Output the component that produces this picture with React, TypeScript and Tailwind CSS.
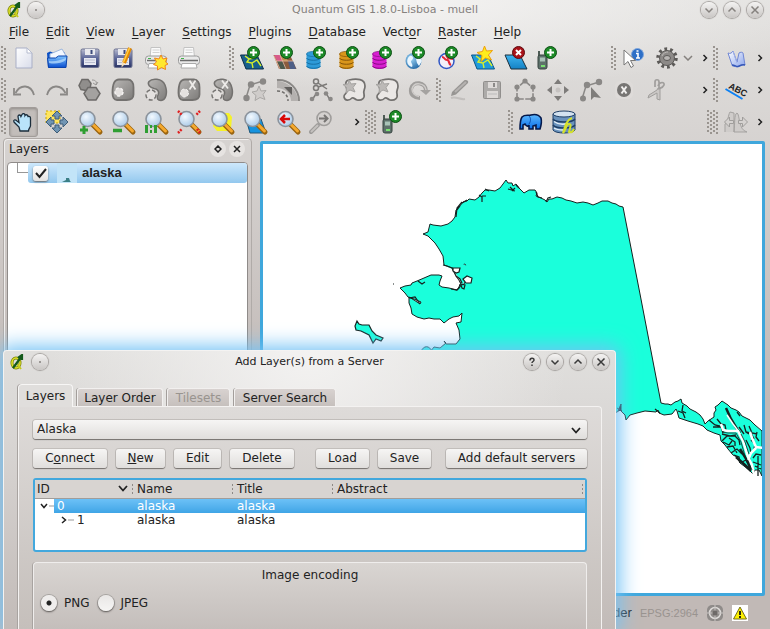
import type { ReactNode } from "react";

const GRAY = "#8a8886";

function Defs() {
  return (
    <svg className="absolute h-0 w-0" aria-hidden="true">
      <defs>
        <linearGradient id="steel" x1="0" y1="0" x2="0" y2="1">
          <stop offset="0" stopColor="#b9bcd0" />
          <stop offset="0.5" stopColor="#5b6699" />
          <stop offset="1" stopColor="#2b3566" />
        </linearGradient>
        <linearGradient id="paper" x1="0" y1="0" x2="1" y2="1">
          <stop offset="0" stopColor="#ffffff" />
          <stop offset="1" stopColor="#d8dcea" />
        </linearGradient>
        <linearGradient id="sea" x1="0" y1="0" x2="0" y2="1">
          <stop offset="0" stopColor="#3db4f0" />
          <stop offset="1" stopColor="#1481c4" />
        </linearGradient>
        <linearGradient id="folder" x1="0" y1="0" x2="0" y2="1">
          <stop offset="0" stopColor="#7fc4ff" />
          <stop offset="1" stopColor="#0a4fd0" />
        </linearGradient>
        <linearGradient id="pages" x1="0" y1="0" x2="1" y2="1">
          <stop offset="0" stopColor="#ffffff" />
          <stop offset="1" stopColor="#8aa4ec" />
        </linearGradient>
        <linearGradient id="metal" x1="0" y1="0" x2="1" y2="1">
          <stop offset="0" stopColor="#b9b7b5" />
          <stop offset="1" stopColor="#7d7b79" />
        </linearGradient>
        <linearGradient id="azure" x1="0" y1="0" x2="0" y2="1">
          <stop offset="0" stopColor="#5cb8ff" />
          <stop offset="1" stopColor="#0c6fe8" />
        </linearGradient>
        <radialGradient id="lens" cx="0.4" cy="0.35" r="0.7">
          <stop offset="0" stopColor="#f2f9ff" />
          <stop offset="1" stopColor="#a8c8e6" />
        </radialGradient>
        <radialGradient id="globe" cx="0.35" cy="0.35" r="0.8">
          <stop offset="0" stopColor="#9fd6f5" />
          <stop offset="1" stopColor="#125a9c" />
        </radialGradient>
      </defs>
    </svg>
  );
}

function Icon({ children }: { children: ReactNode }) {
  return (
    <svg width="24" height="24" viewBox="0 0 24 24" fill="none" aria-hidden="true" className="shrink-0 overflow-visible">
      {children}
    </svg>
  );
}

const Plus = () => (
  <>
    <circle cx="13.5" cy="6.5" r="6" fill="#1c8a27" stroke="#0c4f13" />
    <path d="M13.5 3v7M10 6.5h7" stroke="#fff" strokeWidth="2" />
  </>
);

const Db = ({ c, d }: { c: string; d: string }) => (
  <>
    <path d="M0.5 8v12c0 4 14 4 14 0V8z" fill={c} />
    <ellipse cx="7.5" cy="8" rx="7" ry="2.6" fill={c} stroke={d} strokeWidth="0.7" />
    <path d="M0.5 12c1 3 13 3 14 0M0.5 16c1 3 13 3 14 0M0.5 20c1 3 13 3 14 0" stroke={d} />
  </>
);

const MapSheet = () => (
  <>
    <path d="M0.5 9H17l6.5 14H6z" fill="#17608c" stroke="#0b2f4a" />
    <path d="M5 10l4 3-2 3 5 1 1 5M12 17l5-3 4 6M9 13l6-1" stroke="#d6ef2c" strokeWidth="1.4" />
  </>
);

const Floppy = () => (
  <>
    <rect x="3" y="3" width="18" height="18.5" rx="1.5" fill="url(#steel)" stroke="#6a7090" />
    <rect x="7" y="3" width="10" height="6" fill="#e8e9ee" />
    <path d="M13.5 4v4" stroke="#3d4a7c" strokeWidth="2" />
    <rect x="6" y="12" width="12" height="7" fill="#e6e8f1" />
    <path d="M7 14h10M7 16.5h10" stroke="#b9bdd0" />
  </>
);

const Printer = () => (
  <>
    <path d="M7 1.5h9.500l1 10H6z" fill="#fafafa" stroke="#c3c3c3" />
    <path d="M8.500 4h7M8.500 6.500h7" stroke="#d2d2d2" />
    <rect x="1.5" y="10" width="21" height="8.500" rx="3" fill="#e9e9e9" stroke="#9b9b9b" />
    <path d="M3 14.500h18" stroke="#6d6d6d" strokeWidth="1.5" />
    <path d="M5 17.500h14l1 4.500H4z" fill="#fff" stroke="#aaa" />
    <path d="M4 12.500h3" stroke="#40b34a" />
  </>
);

const Glass = () => (
  <>
    <path d="M15 15l7 7" stroke="#9a6410" strokeWidth="5" strokeLinecap="round" />
    <path d="M15.500 15l6 6" stroke="#f5a92e" strokeWidth="3" strokeLinecap="round" />
    <circle cx="9.500" cy="9" r="7.500" fill="url(#lens)" stroke="#8b939c" strokeWidth="1.600" />
  </>
);

const GlassMirror = () => (
  <>
    <path d="M9 15l-7 7" stroke="#9c9a98" strokeWidth="4" strokeLinecap="round" />
    <path d="M8.500 15.500l-6 6" stroke="#c4c1bf" strokeWidth="2" strokeLinecap="round" />
    <circle cx="15" cy="8.500" r="7" fill="#d4d1cf" stroke="#a09e9c" strokeWidth="1.600" />
    <path d="M10 8.500h8M15 5l3.500 3.500L15 12" stroke="#777573" strokeWidth="2" />
  </>
);

const GpsUnit = () => (
  <>
    <path d="M2 5v5" stroke="#4d5b55" strokeWidth="2" />
    <rect x="1" y="9" width="9" height="14" rx="2" fill="#5d716a" stroke="#36433f" />
    <rect x="3" y="11.500" width="5" height="4" fill="#a9c3b7" />
    <path d="M4 20h4" stroke="#79e070" strokeWidth="2" />
  </>
);

const BLOB = "M8 1.500h9c3.500 0 6 4 5.500 8v7c0 4-3 5.500-7 5.500H6c-3 0-4.500-3-4.500-7C1.500 7 3 1.500 8 1.500z";
const CRESCENT = "M5 3.500C8 0 18 0 21 7c3 8 1 15-4 15.500-3 0-5-2-3-5.500 2-4-1-6-4-6.500-4-1-7-4-5-7z";

const icons: Record<string, ReactNode> = {
  new: <><path d="M4 2h11l5 5v15H4z" fill="url(#paper)" stroke="#a9afc6" /><path d="M15 2v5h5z" fill="#fff" stroke="#b6bccf" /></>,
  open: (
    <>
      <path d="M2 7l3-1.500 3 1h12l1 15H3z" fill="#0c50c4" />
      <path d="M5 8l12-5 4 7-16 6z" fill="#f4f8ff" stroke="#9db7dd" />
      <path d="M2.500 12h8l3-2h8.500l-1 11.500H3.500z" fill="url(#folder)" stroke="#0b43ac" />
      <path d="M4 15c6 1 11-1 17-3l-.300 2C16 18 9 18 4.200 17z" fill="#bfe2ff" opacity="0.700" />
    </>
  ),
  save: <Floppy />,
  saveAs: <><Floppy /><path d="M19 2l-6 15" stroke="#e68a00" strokeWidth="4" /><path d="M18.500 2l-6 14" stroke="#ffcd42" strokeWidth="1.500" /><path d="M11 16l3.500 1.500-4 4z" fill="#f7e1b8" /></>,
  composer: (
    <>
      <Printer />
      <path d="M17 9l2 4 4-1-1.500 4 2.500 2-3 1.500.5 4-4-2-4 2.500v-4l-4-1.500 3-2.500-2-4 4.500 1z" fill="#ffe82e" stroke="#f0841a" />
    </>
  ),
  printer: <Printer />,
  addVector: <><MapSheet /><Plus /></>,
  addRaster: (
    <>
      <path d="M0.500 9H17l6.500 14H6z" fill="#8c5c3d" />
      <path d="M1 9h6l3 6H4z" fill="#d85a8a" /><path d="M7 9h5l3 6h-5z" fill="#b9904e" />
      <path d="M4 15h6l3.500 8H7z" fill="#4d5a4d" /><path d="M15 15h5l3 8h-6z" fill="#4e5f87" />
      <path d="M1 10l6 13M7 9l6 14M3 15h17" stroke="#efbca1" strokeWidth="0.800" />
      <Plus />
    </>
  ),
  addBlue: <><Db c="#2e9bd8" d="#1870a5" /><Plus /></>,
  addOrange: <><Db c="#d9961b" d="#855509" /><Plus /></>,
  addPink: <><Db c="#d71fd0" d="#850b82" /><Plus /></>,
  addWms: <><circle cx="8.500" cy="15" r="8" fill="url(#globe)" /><path d="M3 12c3-5 7 0 4 2s2 4 0 7c-4-1-6-5-4-9zM11 13l4-2 2 4-3 5-2-3z" fill="#e9f6ff" /><Plus /></>,
  addWfs: <><circle cx="8.500" cy="15" r="7.500" fill="#f3eff8" stroke="#3157c4" strokeWidth="1.500" /><path d="M4 11c3 0 2 3 5 3s1 4 4 5M8 9l2 3 5 1" stroke="#e32636" strokeWidth="2.200" /><Plus /></>,
  newShape: (
    <>
      <path d="M0.500 9H17l6.500 14H6z" fill="#1f9bdc" stroke="#0b5688" />
      <path d="M5 10l4 3-2 3 5 1 1 5M12 17l5-3 4 6" stroke="#d6ef2c" strokeWidth="1.400" />
      <path d="M13.500 0l2 5 6-.5-4 4.500 3 5-6-2-4.500 3.500 1-6-5-3 5.500-1z" fill="#ffec1c" stroke="#efa00c" />
    </>
  ),
  removeLayer: <><path d="M1 9h15l7 14H7z" fill="url(#sea)" stroke="#1c2f3c" /><circle cx="14.500" cy="6.500" r="6" fill="#a91219" stroke="#5d0a0e" /><path d="M12 4l5 5M17 4l-5 5" stroke="#fff" strokeWidth="2" /></>,
  gps: <><GpsUnit /><Plus /></>,
  identify: (
    <>
      <circle cx="15.500" cy="8.500" r="6" fill="#2d6fc7" stroke="#7ea6dc" />
      <path d="M14 7.500h2v4.500M14 12h4M14.500 5h2" stroke="#fff" strokeWidth="1.600" />
      <path d="M2 4v15l4-3.500 3 6 2.500-1.500-3-5.500h5z" fill="#fff" stroke="#777" />
    </>
  ),
  gear: (
    <>
      <circle cx="12" cy="12" r="9" stroke="#5c5a58" strokeWidth="3.500" strokeDasharray="2.700 2.954" />
      <circle cx="12" cy="12" r="7.500" fill="#8d8a88" stroke="#5c5a58" />
      <ellipse cx="12" cy="12" rx="3.500" ry="2.500" fill="#b9b6b4" stroke="#5c5a58" />
      <path d="M7 10c1-3 4-4 6-4" stroke="#bbb8b6" />
    </>
  ),
  book: (
    <>
      <path d="M4 7c2 1 4 0 5-2l4 11 2-9c1-1 4-1 4 0l2 12c-3-1-6 1-8 2-2-1-5 0-5-2z" fill="url(#pages)" stroke="#6f86d4" />
      <path d="M9 5l4 12" stroke="#9db0e8" />
      <path d="M8 19c3 0 4 2 6 1.500s4-2.500 7-1.500" stroke="#3557b8" strokeWidth="1.500" />
    </>
  ),
  undo: <><path d="M22 17C19 6 8 6 3.500 15" stroke={GRAY} strokeWidth="1.800" /><path d="M2 10v6.500h7" stroke={GRAY} strokeWidth="1.800" /></>,
  redo: <><path d="M2 17C5 6 16 6 20.500 15" stroke={GRAY} strokeWidth="1.800" /><path d="M22 10v6.500h-7" stroke={GRAY} strokeWidth="1.800" /></>,
  simplify: <><path d="M4 1.500h6l3 4-1 5-4 2-5-1-2-4z" fill="#908e8c" stroke="#6c6a68" strokeWidth="1.500" /><path d="M10 9.500h8l4 6-4 6.500h-8l-4-6.500z" fill="#a4a2a0" stroke="#6c6a68" strokeWidth="1.500" /><path d="M14 2c4 0 5 2 4 5M15 5l3 2 2-3" stroke="#979593" /></>,
  ring: <><path d={BLOB} fill="url(#metal)" stroke="#73716f" strokeWidth="1.800" /><circle cx="8" cy="14" r="4" fill="#e4e1df" stroke="#f5f3f2" strokeWidth="1.500" strokeDasharray="3 2" /></>,
  part: <><path d={CRESCENT} fill="url(#metal)" stroke="#73716f" strokeWidth="1.500" /><circle cx="7" cy="17" r="5" fill="#e4e1df" stroke="#777573" strokeWidth="1.500" strokeDasharray="4 2" /></>,
  delRing: <><path d={BLOB} fill="url(#metal)" stroke="#73716f" strokeWidth="1.800" /><circle cx="7.500" cy="15" r="4" fill="#e4e1df" stroke="#f5f3f2" strokeDasharray="3 2" /><path d="M12.500 2.500l6 9M18.500 2.500l-6 9" stroke="#eeecea" strokeWidth="1.800" /></>,
  delPart: <><path d={CRESCENT} fill="url(#metal)" stroke="#73716f" strokeWidth="1.500" /><circle cx="7" cy="17" r="5" fill="#e4e1df" stroke="#777573" strokeWidth="1.500" strokeDasharray="4 2" /><path d="M12 2.500l6 8M18 2.500l-6 8" stroke="#eeecea" strokeWidth="1.800" /></>,
  reshape: (
    <>
      <path d="M3 20l4-13 13-4" stroke={GRAY} strokeWidth="1.500" />
      <circle cx="3.500" cy="20" r="3.200" fill={GRAY} /><circle cx="8" cy="6.500" r="3.200" fill={GRAY} /><circle cx="20" cy="3.500" r="3.200" fill={GRAY} />
      <path d="M16 8l2 5 5-.5-3 4 2 5-5-2-5 3 1-5-4-3.500 5-1z" fill="#cfccca" stroke="#aaa8a6" />
    </>
  ),
  offset: <><path d="M1 3c10 0 21 9 21 20h-7C15 15 8 10 1 10z" fill="#b4b1af" /><path d="M1 2c12-1 22 9 22 21" stroke={GRAY} strokeWidth="2" /><path d="M1 13c7 0 11 4 11 10" stroke="#6f6d6b" strokeWidth="1.500" strokeDasharray="3 2" /><path d="M8 9h8v8z" fill="#62605e" /></>,
  split: (
    <>
      <circle cx="7" cy="3.500" r="2.500" stroke="#7b7977" strokeWidth="1.500" /><circle cx="7" cy="10" r="2.500" stroke="#7b7977" strokeWidth="1.500" />
      <path d="M9 5l9 6M9 9l9-3M3 22l4-6M21 22l-4-7" stroke="#7b7977" strokeWidth="1.500" />
      <circle cx="3" cy="21" r="2.300" fill={GRAY} /><circle cx="8" cy="16" r="2.300" fill={GRAY} /><circle cx="17" cy="15.500" r="2.300" fill={GRAY} /><circle cx="21.500" cy="21" r="2.300" fill={GRAY} />
    </>
  ),
  merge: (
    <>
      <path d="M7 2c8-2 16-1 16 6 0 4-2 4-1 8s-2 7-7 6c-3-1-3-3-5-2-3 3-7 3-8-1-.5-4 4-3 3-7S2 3 7 2z" fill="#eae7e5" stroke="#73716f" strokeWidth="1.700" />
      <path d="M7 2l2 4 5-.5-3 4 2 4.500-5-2-4 2.500.5-5L1 6.500l5-.5z" fill="#bcb9b7" stroke="#a5a3a1" />
    </>
  ),
  rotate: <><path d="M18 13C18 4 5 2 3 11c-1 6 4 9 9 9" stroke="#a09e9c" strokeWidth="4" /><path d="M18 12C17 5 6 3 4 11c0 4 3 7 7 7.500" stroke="#cfccca" strokeWidth="1.500" /><path d="M12 12h11l-5 5z" fill="#a4a2a0" /></>,
  pencil: <><path d="M5 14L17 2.500c2-1 5 0 4 2.500L9 16.500 4 18z" fill="#979593" /><path d="M8 14L19 4" stroke="#b5b2b0" strokeWidth="2" /><path d="M4 20c5-2 9 2 14 1" stroke="#c2bfbd" strokeWidth="2" /></>,
  saveGray: <><rect x="3.500" y="3.500" width="17" height="17" rx="1" fill="#adaba9" stroke="#918f8d" /><rect x="8" y="4" width="9" height="6" fill="#dedbd9" /><path d="M14 5v4" stroke="#8c8a88" strokeWidth="2" /><rect x="7" y="13" width="11" height="7" fill="#dcd9d7" /><path d="M8 16h9" stroke="#bbb" /></>,
  polygon: (
    <>
      <path d="M4 21V10l8-7 8 7v11z" stroke={GRAY} strokeWidth="1.600" strokeDasharray="6 1.500" />
      {[[4, 21], [4, 9], [12, 3], [20, 9], [20, 21]].map(([x, y]) => <circle key={`${x}-${y}`} cx={x} cy={y} r="2.600" fill={GRAY} />)}
    </>
  ),
  move: <><path d="M12 1l4 5H8zM12 23l4-5H8zM1 12l5-4v8zM23 12l-5-4v8z" fill="#7d7b79" /><path d="M9.500 12a2.500 2.500 0 105 0 2.500 2.500 0 10-5 0" fill="#c5c2c0" /></>,
  node: <><path d="M3 21l4-13 13-4" stroke={GRAY} strokeWidth="1.500" /><circle cx="4" cy="20.500" r="3" fill={GRAY} /><circle cx="8" cy="7" r="3.200" fill={GRAY} /><circle cx="20" cy="4" r="3.200" fill={GRAY} /><path d="M12 9v13l3-3 7 1z" fill="#7f7d7b" /></>,
  remove: <><rect x="3" y="3" width="18" height="18" rx="5" fill="#dedbd9" /><circle cx="12" cy="12" r="7" fill="#777573" /><path d="M9.500 8.500l5 7M14.500 8.500l-5 7" stroke="#f2f0ef" strokeWidth="2" /></>,
  scissors: (
    <>
      <path d="M12 12L4 17l-1 3 9-5v6l3 1V7z" fill="#cbc8c6" stroke="#a09e9c" />
      <path d="M10 9V4c0-3 4-3 4 0v6M13 8c2-5 7-4 6-1s-4 3-6 4" fill="#d9d6d4" stroke="#a09e9c" strokeWidth="1.700" />
    </>
  ),
  label: (
    <>
      <text x="4" y="10" transform="rotate(28 4 10)" fontFamily="Liberation Sans, Arial, sans-serif" fontWeight="700" fontSize="9" fill="#222">ABC</text>
      <path d="M1.500 11l17 10" stroke="#0b80f4" strokeWidth="2" />
    </>
  ),
  pan: (
    <path d="M8 21l-1-4-5-5c-1-2 1-3 3-1l2 1.500-1-6c0-2 2.500-2 3 0l1-2c1-1.500 3-1 3 1 1-1.500 3-.5 3 1 2-.5 2.500.5 2.500 2v7c0 2-2 3-2 5.500z" fill="#b9e4fa" stroke="#1b2d3b" strokeWidth="1.300" />
  ),
  panSel: (
    <>
      <path d="M1 1h14v12H1z" fill="#ffe55e" stroke="#c9a500" strokeDasharray="2 2" />
      <path d="M12 1l5 5h-3v3h-4V6H7zM12 23l5-5h-3v-3h-4v3H7zM1 12l5-5v3h3v4H6v3zM23 12l-5-5v3h-3v4h3v3z" fill="#7195b3" stroke="#3e5d78" />
    </>
  ),
  zoomIn: <><Glass /><path d="M6 16v8M2 20h8" stroke="#2f9e32" strokeWidth="3" /></>,
  zoomOut: <><Glass /><path d="M2 20.500h9" stroke="#2f9e32" strokeWidth="3.500" /></>,
  zoomNative: <><Glass /><path d="M1 15h3v8H1zM10 15h3v8h-3z" fill="#2f9e32" /><path d="M7 15v3M7 20v3" stroke="#2f9e32" strokeWidth="2" /></>,
  zoomFull: <><Glass /><path d="M1 1l4 4M23 1l-4 4M1 23l4-4M23 23l-3-4" stroke="#e02020" strokeWidth="2.500" strokeDasharray="2 1" /></>,
  zoomSel: <><path d="M8 3h11l3 4-1 12-4 2H7l-4-5z" fill="#f5f22a" /><Glass /></>,
  zoomLayer: <><path d="M3 9h15l5 14H7z" fill="#1693df" stroke="#205779" /><Glass /></>,
  zoomLast: <><Glass /><path d="M5 9h9M9 5L5 9l4 4" stroke="#d90a0a" strokeWidth="2.500" /></>,
  zoomNext: <GlassMirror />,
  elephant: (
    <>
      <path d="M3 7c3-3 7-1 9-2 4-1 8 0 10 3 1 4 0 8-1 11h-4v-4l-3 1v3h-4v-4c-1 2-3 1-4-1l-2 1v4H1c0-4 0-9 2-12z" fill="url(#azure)" stroke="#04184a" strokeWidth="1.600" />
      <path d="M10 6c2 2 2 5 0 8" stroke="#0b4fb3" />
    </>
  ),
  spatial: (
    <>
      <path d="M1 4v16c2 4 20 4 22 0V4z" fill="#6a93bd" stroke="#1f3f66" />
      <ellipse cx="12" cy="4" rx="11" ry="3" fill="#d3e2f0" stroke="#1f3f66" />
      <path d="M1 9c3 4 19 4 22 0M1 15c3 4 19 4 22 0" stroke="#1f3f66" strokeWidth="1.500" />
      <path d="M2 11.500c4 3 10 3 14 2M2 18c3 2 7 2 9 2" stroke="#e4eef7" strokeWidth="1.500" />
      <path d="M20 8c-6 2-7 9-9 15 3-3 3-9 6-9s1 4 0 8c2 1 4-1 5-3" stroke="#d4e02c" strokeWidth="2" />
    </>
  ),
  histogram: (
    <>
      <path d="M1 22V14c3-1 3-9 5-12l4 1v19M10 22c1-8 0-18 3-19 3 1 1 17 10 19z" fill="#cfccca" stroke="#a5a3a1" />
      <path d="M0.500 12l5-5v3.500h4v3h-4V17zM23.500 12l-5-5v3.500h-4v3h4V17z" fill="#d5d2d0" stroke="#a09e9c" />
    </>
  ),
};

function Tool({ name, label, on = false }: { name: string; label: string; on?: boolean }) {
  return (
    <button
      type="button"
      aria-label={label}
      className={
        "flex h-[30px] shrink-0 items-center justify-center " +
        (on ? "mx-0.5 w-[29px] rounded-[3px] border border-[#a19c99] bg-[#c2bdba] shadow-[inset_0_1px_3px_#8f8a87]" : "w-[33px]")
      }
    >
      <Icon>{icons[name]}</Icon>
    </button>
  );
}

function Tools({ names }: { names: string[] }) {
  return (
    <>
      {names.map((n, i) => (
        <Tool key={n + i} name={n.replace("2", "")} label={n} />
      ))}
    </>
  );
}

const DOTS =
  "bg-[radial-gradient(circle_at_1px_1px,#99948f_0.8px,transparent_1px),radial-gradient(circle_at_4px_3px,#99948f_0.8px,transparent_1px)] bg-[length:6px_4px]";

function Grip({ wide = false }: { wide?: boolean }) {
  return <span className={`h-6 shrink-0 ${wide ? "w-3" : "w-1.5"} ${DOTS}`} />;
}

function More() {
  return (
    <button type="button" aria-label="More tools" className="flex h-6 w-4 shrink-0 items-center justify-center">
      <svg width="6" height="8" viewBox="0 0 6 8" fill="none">
        <path d="M1.500 1l3 3-3 3" stroke="#222" strokeWidth="1.500" />
      </svg>
    </button>
  );
}

const BAR = "flex h-8 items-center pr-0.5 pl-px";

function Toolbars() {
  return (
    <div>
      <div className={BAR}>
        <Grip />
        <Tools names={["new", "open", "save", "saveAs", "composer", "printer"]} />
        <span className="w-6 shrink-0" />
        <Grip />
        <Tools names={["addVector", "addRaster", "addBlue", "addOrange", "addPink", "addWms", "addWfs", "newShape", "removeLayer", "gps"]} />
        <span className="flex-1" />
        <Grip />
        <Tools names={["identify", "gear"]} />
        <svg width="10" height="6" viewBox="0 0 10 6" fill="none" className="shrink-0">
          <path d="M1 1l4 4 4-4" stroke="#85817e" strokeWidth="1.500" />
        </svg>
        <span className="w-1 shrink-0" />
        <More />
        <Grip />
        <Tool name="book" label="Help contents" />
        <More />
      </div>
      <div className={BAR}>
        <Grip />
        <Tools names={["undo", "redo", "simplify", "ring", "part", "delRing", "delPart", "reshape", "offset", "split", "merge", "merge2", "rotate"]} />
        <Grip />
        <Tools names={["pencil", "saveGray", "polygon", "move", "node", "remove", "scissors"]} />
        <span className="flex-1" />
        <More />
        <Grip />
        <Tool name="label" label="Labeling" />
        <More />
      </div>
      <div className={BAR}>
        <Grip />
        <Tool name="pan" label="Pan map" on />
        <Tools names={["panSel", "zoomIn", "zoomOut", "zoomNative", "zoomFull", "zoomSel", "zoomLayer", "zoomLast", "zoomNext"]} />
        <span className="w-3 shrink-0" />
        <More />
        <Grip wide />
        <Tool name="gps" label="GPS tools" />
        <span className="w-[98px] shrink-0" />
        <Grip />
        <Tools names={["elephant", "spatial"]} />
        <span className="flex-1" />
        <Grip wide />
        <Tool name="histogram" label="Stretch histogram" />
        <More />
      </div>
    </div>
  );
}

const MENUS: [string, string, string][] = [
  ["", "F", "ile"],
  ["", "E", "dit"],
  ["", "V", "iew"],
  ["", "L", "ayer"],
  ["", "S", "ettings"],
  ["", "P", "lugins"],
  ["", "D", "atabase"],
  ["Vect", "o", "r"],
  ["", "R", "aster"],
  ["", "H", "elp"],
];

function Logo() {
  return (
    <svg width="14" height="16" viewBox="0 0 14 16" fill="none" aria-hidden="true">
      <ellipse cx="6" cy="9" rx="4" ry="5" stroke="#7d8508" strokeWidth="3" />
      <ellipse cx="6" cy="9" rx="4" ry="5" stroke="#dfe32a" strokeWidth="1.500" />
      <path d="M7 10l4 5" stroke="#c4c91d" strokeWidth="2" />
      <path d="M3 14L12 2M8 4l4-3 0 5" stroke="#145a1c" strokeWidth="2.200" />
    </svg>
  );
}

const GLYPHS: Record<string, string> = {
  dot: "M7 8h2",
  down: "M4.500 6.500l3.500 3.500 3.500-3.500",
  up: "M4.500 9.500L8 6l3.500 3.500",
  close: "M4.500 4.500l7 7M11.500 4.500l-7 7",
  help: "M6 6.500c0-3 4-3 4-.5 0 1.500-2 1.500-2 3M8 10.500v1.500",
};

function RoundButton({ kind, dark = false }: { kind: string; dark?: boolean }) {
  return (
    <button
      type="button"
      aria-label={kind}
      className="h-4 w-4 shrink-0 rounded-full bg-gradient-to-b from-[#f4f3f2] to-[#c9c6c4] shadow-[0_0_1px_1px_#a29e9b]"
    >
      <svg width="16" height="16" viewBox="0 0 16 16" fill="none">
        <path d={GLYPHS[kind]} stroke={dark ? "#3a3a3a" : "#85817e"} strokeWidth="1.500" />
      </svg>
    </button>
  );
}

const ALASKA =
  "M423 234L428 232 430 224 433 225 441 226 448 224 452 221 455 217 456 210 459 207 463 202 467 201 469 199 475 200 479 197 482 193 485 190 489 190 495 191 500 188 503 184 506 180 508 183 512 183 513 186 516 184 519 188 521 190 524 193 529 190 535 190 537 193 536 196 541 198 545 200 547 202 549 199 552 199 557 197 562 198 566 200 571 201 577 203 583 202 588 203 593 205 598 203 602 201 608 201 612 203 616 204 619 206 623 207 640 294 661 403 665 404 668 404 671 405 675 402 678 401 681 399 682 403 687 406 690 409 696 412 700 415 703 419 705 424 708 421 714 417 714 413 716 410 715 407 718 405 722 401 725 403 728 405 731 408 736 410 739 412 742 416 746 418 750 420 755 425 762 431 762 476 759 470 755 470 753 474 749 470 744 466 740 463 737 457 733 455 728 449 725 445 721 441 720 435 714 433 707 430 703 426 698 424 688 421 679 418 677 411 676 409 672 414 664 415 659 413 658 410 656 412 645 411 637 413 630 415 626 420 625 415 623 413 620 410 617 412 560 430 440 400 430 352 434 347 440 348 446 343 444 341 446 344 456 344 460 339 459 330 456 323 461 322 462 313 459 316 453 317 449 319 444 323 440 319 434 319 429 318 424 319 417 317 412 314 411 308 409 303 409 297 414 300 420 304 421 302 414 299 408 297 405 293 400 288 405 286 411 285 412 283 417 281 424 278 431 275 439 275 442 276 440 281 439 285 442 287 449 288 457 290 459 287 460 284 462 285 464 284 466 280 470 277 465 264 452 268 444 265 443 256 439 249 435 243 428 236z";

function MapView() {
  return (
    <svg viewBox="263 144 499 449" preserveAspectRatio="xMinYMin meet" className="block h-full w-full" role="img" aria-label="Map of alaska">
      <path d={ALASKA} fill="#1affdb" stroke="#16211f" strokeWidth="1" />
      <path d="M444 265l8 3 7-6 8 4 8 8-3 8-8 0-2 3-3-7-7-9z" fill="#1affdb" />
      <path d="M443 265l4 1 5 2 4 8 3 4 2 4 4 1-1 4-2-1-1-3-2 3-2 2-6-1" fill="none" stroke="#16211f" strokeWidth="1.200" />
      <path d="M453 268l7 0-1 4-3 1-3-2zM463 279l4-3 5 2-1 5-5 0zM456 276l4 3 2 4" fill="#fff" stroke="#16211f" strokeWidth="1.200" />
      <path d="M357 321l2 3 3 1 7 0 3 6 4 4 7 3-2 3-5-2-3 4-4-8-8-4-5-1-1-4z" fill="#1affdb" stroke="#16211f" strokeWidth="1.200" />
      <path d="M421 352c2-7 9-7 11 0" fill="#1affdb" stroke="#16211f" />
      <path d="M393 284h1" stroke="#16211f" />
      <path
        d="M479 195l3 2 0 5M482 196l4 0M485 189l4 2M508 189l7 2M510 187l4 4M516 185l3 3M512 191l3-3M462 203l5-3M457 210l3-4M456 217l1-9 5-6M536 192l2 5 4 1M546 202l2-4 3-1M409 298l6-1 5 7M418 281l4 3 3-2"
        stroke="#16211f"
        strokeWidth="1.200"
        fill="none"
      />
      <path
        d="M709 420l6 5 5 1 4 6M713 427l8 0 2 6M717 419l4 5 4 1 1 5M722 441l5-5 8 0 4 4 1 5M722 434l8 2 6-1M723 442l6 3 3-4M727 447l6-1 4 7M731 453l6-4 5 5M734 455l5 2 1 6M742 462l4-2 5 9M744 425l2 7 3 2M746 432l5 1 3 6M749 426l3 7 5 1M757 432l-1 5 3 4M751 440l4 4-1 5M746 440l4 8 1 6M753 458l3-4 5 1M753 462l8 3M755 466l6 3M758 456l0 20M737 412l3 4M739 427l5 7M678 411l5 2 2 5M683 405l-1 6 4 2M655 409l5 4M729 438l6 4 0 4"
        stroke="#16211f"
        strokeWidth="1.300"
        fill="none"
      />
      <path d="M726 408l5 11 6 10 3 4M740 449l5 8 6 12M736 457l9 8 6 6M748 455l2 8" stroke="#16211f" strokeWidth="2.500" fill="none" />
      <path d="M727 415l6 9 6 8" stroke="#fff" strokeWidth="1.500" fill="none" />
      <path d="M721 424l2 6 5 1 10 0 5 10 5 16 4 8 2 10M750 432l2 6 4 9 7 1M748 460l3-7 5-5" stroke="#fff" strokeWidth="2.500" fill="none" />
      <path d="M722 432l6 1 8 0 5 9 4 14 7 14M741 434l4 8 4 12" stroke="#16211f" strokeWidth="0.800" fill="none" />
      <path d="M618 411l3-7 0 7M617 408l5 3" stroke="#16211f" />
    </svg>
  );
}

function LayersDock() {
  return (
    <section aria-label="Layers" className="flex w-[249px] shrink-0 flex-col rounded-t border border-[#b0aba8] px-[3px] shadow-[inset_1px_1px_0_#efedec]">
      <header className="flex h-[23px] items-center pr-[3px] pb-1 pl-0.5">
        <h2 className="flex-1">Layers</h2>
        <button type="button" aria-label="Float panel" className="flex h-4 w-4 items-center justify-center rounded-full bg-[#e6e3e1]">
          <svg width="8" height="8" viewBox="0 0 8 8" fill="none"><path d="M4 1l3 3-3 3-3-3z" stroke="#222" strokeWidth="1.500" /></svg>
        </button>
        <button type="button" aria-label="Close panel" className="ml-[3px] flex h-4 w-4 items-center justify-center rounded-full bg-[#e6e3e1]">
          <svg width="8" height="8" viewBox="0 0 8 8" fill="none"><path d="M1 1l6 6M7 1L1 7" stroke="#222" strokeWidth="1.500" /></svg>
        </button>
      </header>
      <div className="flex-1 rounded-t border border-[#8f8b89] bg-white">
        <div className="flex h-5">
          <span className="ml-[9px] h-2.5 w-[11px] shrink-0 border-b border-l border-[#979797]" />
          <label className="flex flex-1 items-center rounded-[3px] bg-gradient-to-b from-[#cde8fc] to-[#93c8ee] pl-[5px]">
            <input type="checkbox" defaultChecked className="peer sr-only" />
            <span className="flex h-[15px] w-[15px] items-center justify-center rounded-[3px] bg-gradient-to-b from-white to-[#e4e2e0] shadow-[0_1px_2px_#666]">
              <svg width="12" height="12" viewBox="0 0 12 12" fill="none"><path d="M1 6l3.500 4L11 2" stroke="#222" strokeWidth="2" /></svg>
            </span>
            <svg width="20" height="20" viewBox="0 0 20 20" className="ml-[9px] bg-[#c2e4f8]" aria-hidden="true">
              <path d="M5 19l4-2 0-2h3l1 3 1 1z" fill="#3b7f86" />
            </svg>
            <span className="ml-[5px] font-['Liberation_Sans',Arial,sans-serif] text-[13px] font-bold">alaska</span>
          </label>
        </div>
      </div>
    </section>
  );
}

const BTN = "h-[19px] shrink-0 rounded-[3px] bg-gradient-to-b from-[#f6f5f4] to-[#e0dedc] text-center leading-[19px] shadow-[0_1px_1px_#75716e,0_0_0_1px_#c2bebb]";
const TAB = "h-[18px] rounded-t-[3px] border border-b-0 border-[#f2f0ef] bg-gradient-to-b from-[#d8d2d0] to-[#c6c0bd] leading-[18px] shadow-[-1px_0_0_#a39e9b]";
const COLDOTS = "bg-[linear-gradient(#8d8986_50%,transparent_50%)] bg-[length:1px_4px]";

function HeadCell({ name, width, sorted = false }: { name: string; width: string; sorted?: boolean }) {
  return (
    <th className={`h-[18px] border-b border-[#a19d9a] p-0 text-left font-normal ${width}`}>
      <span className="flex items-center pl-0.5">
        <span className="flex-1">{name}</span>
        {sorted && (
          <svg width="10" height="7" viewBox="0 0 10 7" fill="none" className="mr-1"><path d="M1 1l4 4.500L9 1" stroke="#222" strokeWidth="1.800" /></svg>
        )}
        <span className={`mr-0.5 h-2.5 w-px ${COLDOTS}`} />
      </span>
    </th>
  );
}

function ServerTable() {
  return (
    <div className="mt-2.5 h-[74px] overflow-hidden rounded-[3px] border-2 border-[#43a8dd] bg-white">
      <table className="w-full table-fixed border-collapse leading-[14px]">
        <thead className="bg-[#d8d4d1]">
          <tr>
            <HeadCell name="ID" width="w-[100px]" sorted />
            <HeadCell name="Name" width="w-[100px]" />
            <HeadCell name="Title" width="w-[100px]" />
            <HeadCell name="Abstract" width="w-auto" />
          </tr>
        </thead>
        <tbody>
          <tr className="bg-gradient-to-b from-[#6fc3f8] to-[#3fa5e6] text-white">
            <td className="p-0">
              <span className="flex items-center">
                <span className="flex h-[14px] w-[19px] items-center bg-white pl-[5px]">
                  <svg width="14" height="8" viewBox="0 0 14 8" fill="none"><path d="M1 2l3 3.500L7 2" stroke="#222" strokeWidth="1.500" /><path d="M9 4h5" stroke="#999" /></svg>
                </span>
                <span className="pl-[3px]">0</span>
              </span>
            </td>
            <td className="p-0 pl-0.5">alaska</td>
            <td className="p-0 pl-0.5">alaska</td>
            <td className="p-0" />
          </tr>
          <tr>
            <td className="p-0">
              <span className="flex items-center pl-[25px]">
                <svg width="15" height="8" viewBox="0 0 15 8" fill="none"><path d="M2 1l3.500 3L2 7" stroke="#222" strokeWidth="1.500" /><path d="M8 4h6" stroke="#999" /></svg>
                <span className="pl-0.5">1</span>
              </span>
            </td>
            <td className="p-0 pl-0.5">alaska</td>
            <td className="p-0 pl-0.5">alaska</td>
            <td className="p-0" />
          </tr>
        </tbody>
      </table>
    </div>
  );
}

function RadioOption({ label, on = false }: { label: string; on?: boolean }) {
  return (
    <label className="flex items-center gap-[7px]">
      <input
        type="radio"
        name="encoding"
        defaultChecked={on}
        className="h-4 w-4 appearance-none rounded-full bg-gradient-to-b from-[#e9e7e6] to-[#f6f5f4] shadow-[0_1px_2px_#5d5957,0_0_0_1px_#aaa6a3] checked:bg-[radial-gradient(circle,#222_2px,#efedec_3px)]"
      />
      {label}
    </label>
  );
}

function ServerDialog() {
  return (
    <div
      role="dialog"
      aria-label="Add Layer(s) from a Server"
      className="absolute top-[350px] bottom-0 left-[3px] flex w-[613px] flex-col rounded-t-[4px] border border-b-0 border-[#f4f3f2] bg-[#c4beba] bg-[radial-gradient(ellipse_at_50%_0%,#f3f2f1_0%,#f3f2f100_60%),linear-gradient(#e0dfdd,#d8d5d3_90px,#c2bbb8)] shadow-[0_0_20px_4px_#74c2f5]"
    >
      <header className="flex h-[21px] shrink-0 items-center pr-1.5 pl-1.5">
        <div className="flex w-24 items-center gap-2"><Logo /><RoundButton kind="dot" /></div>
        <h2 className="flex-1 text-center text-[11px] text-[#222]">Add Layer(s) from a Server</h2>
        <div className="flex w-24 justify-end gap-[7px]">
          <RoundButton kind="help" dark /><RoundButton kind="down" dark /><RoundButton kind="up" dark /><RoundButton kind="close" dark />
        </div>
      </header>
      <div role="tablist" className="relative mt-3 ml-3.5 flex h-[22px] shrink-0 items-end gap-1">
        <button role="tab" type="button" aria-selected="true" className="relative -mb-px h-[23px] w-[55px] rounded-t-[4px] border border-b-0 border-[#f7f6f5] bg-[#e0dedc] leading-[22px] shadow-[-1px_0_0_#a39e9b]">Layers</button>
        <button role="tab" type="button" className={`${TAB} w-[86px]`}>Layer Order</button>
        <button role="tab" type="button" disabled className={`${TAB} w-[63px] text-[#99948f]`}>Tilesets</button>
        <button role="tab" type="button" className={`${TAB} w-[102px]`}>Server Search</button>
      </div>
      <div className="mr-[13px] ml-3.5 flex flex-1 flex-col rounded-tr-[4px] border border-b-0 border-[#f4f2f1] bg-gradient-to-b from-[#dedbd9] to-[#c5bfbb] px-3.5 pt-[13px] shadow-[-1px_0_0_#a8a3a0]">
        <div className="relative">
          <select aria-label="Server" className={`${BTN} block w-full appearance-none pl-1 !text-left`}>
            <option>Alaska</option>
          </select>
          <svg width="10" height="7" viewBox="0 0 10 7" fill="none" className="pointer-events-none absolute top-[7px] right-1.5">
            <path d="M1 1l4 4.500L9 1" stroke="#222" strokeWidth="1.800" />
          </svg>
        </div>
        <div className="mt-2.5 flex">
          <button type="button" className={`${BTN} w-[74px]`}>C<u>o</u>nnect</button>
          <button type="button" className={`${BTN} ml-[9px] w-[49px]`}><u>N</u>ew</button>
          <button type="button" className={`${BTN} ml-[9px] w-[47px]`}>Edit</button>
          <button type="button" className={`${BTN} ml-[9px] w-16`}>Delete</button>
          <span className="flex-1" />
          <button type="button" className={`${BTN} w-[53px]`}>Load</button>
          <button type="button" className={`${BTN} ml-[9px] w-[53px]`}>Save</button>
          <button type="button" className={`${BTN} ml-[15px] w-[141px]`}>Add default servers</button>
        </div>
        <ServerTable />
        <fieldset className="mt-2.5 flex-1 rounded-t-[4px] border border-b-0 border-[#efedec] bg-gradient-to-b from-[#d9d5d2] to-[#c4bebb] px-[7px] shadow-[-1px_0_0_#a8a3a0]">
          <legend className="float-left w-full pt-1 text-center leading-4">Image encoding</legend>
          <div className="clear-both flex gap-2 pt-3 leading-4">
            <RadioOption label="PNG" on />
            <RadioOption label="JPEG" />
          </div>
        </fieldset>
      </div>
    </div>
  );
}

export default function App() {
  return (
    <div className="relative flex h-screen flex-col overflow-hidden bg-[radial-gradient(ellipse_60%_90px_at_50%_0%,#f4f3f2,#f4f3f200),linear-gradient(#e2e1df,#d8d5d3_120px,#c1b9b6_400px)] font-['DejaVu_Sans',sans-serif] text-[12px] leading-4 text-[#222]">
      <Defs />
      <header className="flex h-5 shrink-0 items-center px-[7px]">
        <div className="flex w-20 items-center gap-[7px]"><Logo /><RoundButton kind="dot" /></div>
        <h1 className="flex-1 text-center text-[11px] text-[#85817e]">Quantum GIS 1.8.0-Lisboa - muell</h1>
        <div className="flex w-20 justify-end gap-[7px]">
          <RoundButton kind="down" /><RoundButton kind="up" /><RoundButton kind="close" />
        </div>
      </header>
      <nav className="flex h-[22px] shrink-0 items-center gap-[17px] pt-0.5 pl-[9px]">
        {MENUS.map(([a, key, b]) => (
          <button key={a + key + b} type="button">
            {a}<span className="underline underline-offset-2">{key}</span>{b}
          </button>
        ))}
      </nav>
      <Toolbars />
      <main className="flex min-h-0 flex-1 pl-[3px]">
        <LayersDock />
        <div className="ml-2 flex min-w-0 flex-1 flex-col">
          <div className="mt-[3px] mr-[5px] min-h-0 flex-1 rounded-[2px] border-[3px] border-[#3fa7dc] bg-white">
            <MapView />
          </div>
          <footer className="flex h-[33px] shrink-0 items-center justify-end pr-[22px] font-['Liberation_Sans',Arial,sans-serif] text-[13px]">
            <span>Render</span>
            <span className="ml-2 text-[11px] text-[#99938f]">EPSG:2964</span>
            <svg width="18" height="18" viewBox="0 0 18 18" fill="none" className="ml-2" aria-hidden="true">
              <rect x="1" y="1" width="16" height="16" rx="5" fill="#8f8b89" />
              <circle cx="9" cy="9" r="5.500" stroke="#dedbd9" strokeWidth="1.500" />
              <path d="M9 1v16M1 9h16" stroke="#c6c2c0" />
              <circle cx="9" cy="9" r="2.500" fill="#6e6a68" />
            </svg>
            <svg width="16" height="16" viewBox="0 0 16 16" className="ml-2 bg-white" role="img" aria-label="Warning">
              <path d="M8 2l6.500 12h-13z" fill="#fdf000" stroke="#76701a" />
              <path d="M8 6v4M8 11v2" stroke="#111" strokeWidth="1.800" />
            </svg>
          </footer>
        </div>
      </main>
      <ServerDialog />
    </div>
  );
}
